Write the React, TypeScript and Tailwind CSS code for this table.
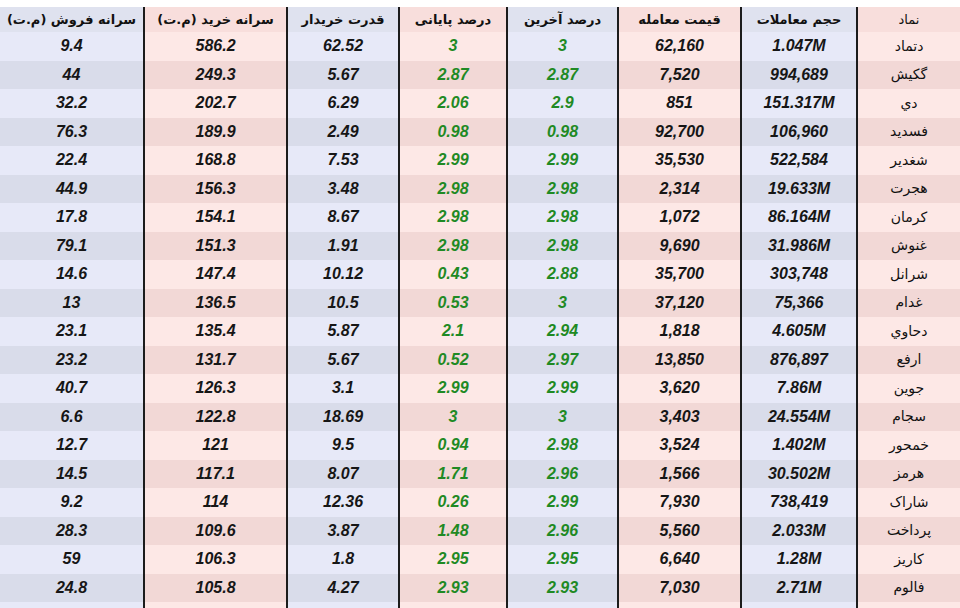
const HEADERS = [
  'نماد',
  'حجم معاملات',
  'قیمت معامله',
  'درصد آخرین',
  'درصد پایانی',
  'قدرت خریدار',
  'سرانه خرید (م.ت)',
  'سرانه فروش (م.ت)',
];

// نماد، حجم، قیمت، درصد آخرین، درصد پایانی، قدرت خریدار، سرانه خرید، سرانه فروش
const ROWS: string[][] = [
  ['دتماد', '1.047M', '62,160', '3', '3', '62.52', '586.2', '9.4'],
  ['گکیش', '994,689', '7,520', '2.87', '2.87', '5.67', '249.3', '44'],
  ['دي', '151.317M', '851', '2.9', '2.06', '6.29', '202.7', '32.2'],
  ['فسدید', '106,960', '92,700', '0.98', '0.98', '2.49', '189.9', '76.3'],
  ['شغدیر', '522,584', '35,530', '2.99', '2.99', '7.53', '168.8', '22.4'],
  ['هجرت', '19.633M', '2,314', '2.98', '2.98', '3.48', '156.3', '44.9'],
  ['کرمان', '86.164M', '1,072', '2.98', '2.98', '8.67', '154.1', '17.8'],
  ['غنوش', '31.986M', '9,690', '2.98', '2.98', '1.91', '151.3', '79.1'],
  ['شرانل', '303,748', '35,700', '2.88', '0.43', '10.12', '147.4', '14.6'],
  ['غدام', '75,366', '37,120', '3', '0.53', '10.5', '136.5', '13'],
  ['دحاوي', '4.605M', '1,818', '2.94', '2.1', '5.87', '135.4', '23.1'],
  ['ارفع', '876,897', '13,850', '2.97', '0.52', '5.67', '131.7', '23.2'],
  ['جوین', '7.86M', '3,620', '2.99', '2.99', '3.1', '126.3', '40.7'],
  ['سجام', '24.554M', '3,403', '3', '3', '18.69', '122.8', '6.6'],
  ['خمحور', '1.402M', '3,524', '2.98', '0.94', '9.5', '121', '12.7'],
  ['هرمز', '30.502M', '1,566', '2.96', '1.71', '8.07', '117.1', '14.5'],
  ['شاراک', '738,419', '7,930', '2.99', '0.26', '12.36', '114', '9.2'],
  ['پرداخت', '2.033M', '5,560', '2.96', '1.48', '3.87', '109.6', '28.3'],
  ['کاریز', '1.28M', '6,640', '2.95', '2.95', '1.8', '106.3', '59'],
  ['فالوم', '2.71M', '7,030', '2.93', '2.93', '4.27', '105.8', '24.8'],
];

const GRID = 'grid grid-cols-[104px_116px_123px_111px_108px_112px_143px_143px]';

function cellBg(col: number, row: number) {
  const pink = col % 2 === 0;
  if (row < 0) return pink ? 'bg-[#f8dedc]' : 'bg-[#dfe2ef]';
  const dark = row % 2 === 1;
  if (pink) return dark ? 'bg-[#f2d8d6]' : 'bg-[#fde8e6]';
  return dark ? 'bg-[#d9dcea]' : 'bg-[#e7e9f8]';
}

function border(col: number) {
  return col < 7 ? 'border-l-2 border-[#1c1c1c]' : '';
}

export default function App() {
  return (
    <div dir="rtl" className="w-[960px] h-[608px] overflow-hidden bg-white pt-[7px]">
      <div className={`${GRID} h-[25px]`}>
        {HEADERS.map((h, c) => (
          <div
            key={h}
            className={`${cellBg(c, -1)} ${border(c)} flex items-center justify-center text-[13px] ${c === 0 ? 'font-normal' : 'font-bold'} text-[#111] font-['DejaVu_Sans',sans-serif]`}
          >
            {h}
          </div>
        ))}
      </div>
      {ROWS.map((r, ri) => (
        <div key={r[0]} className={`${GRID} h-[28.5px]`}>
          {r.map((v, c) => (
            <div
              key={c}
              className={`${cellBg(c, ri)} ${border(c)} flex items-center justify-center`}
            >
              {c === 0 ? (
                <span className="text-[14px] text-[#111] font-['DejaVu_Sans',sans-serif]">{v}</span>
              ) : (
                <span
                  dir="ltr"
                  className={`text-[16px] font-bold italic font-['Liberation_Sans',Arial,sans-serif] ${c === 3 || c === 4 ? 'text-[#1f8a24]' : 'text-[#161616]'}`}
                >
                  {v}
                </span>
              )}
            </div>
          ))}
        </div>
      ))}
      <div className={`${GRID} h-[10px]`}>
        {HEADERS.map((h, c) => (
          <div key={h} className={`${cellBg(c, 20)} ${border(c)}`} />
        ))}
      </div>
    </div>
  );
}
